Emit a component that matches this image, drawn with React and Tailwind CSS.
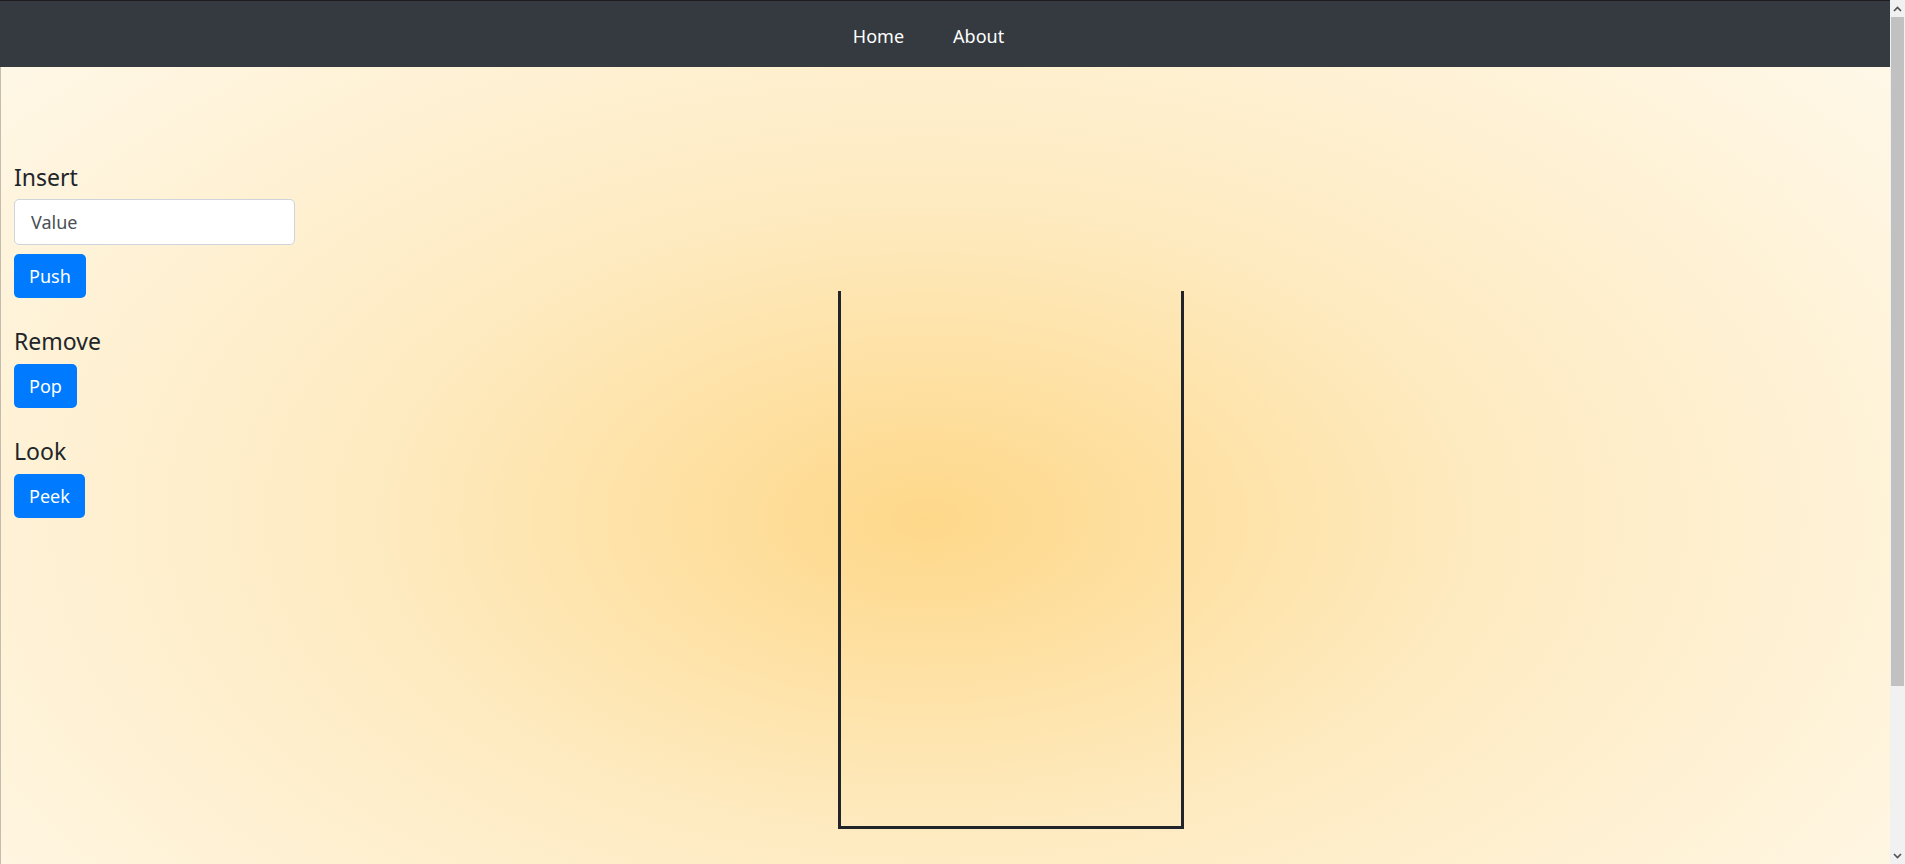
import { useState } from "react";

const font = { fontFamily: '"Segoe UI", "Noto Sans", sans-serif' };

function ActionButton({ children, onClick }) {
  return (
    <button
      type="button"
      onClick={onClick}
      className="h-[44px] px-[15px] rounded-[5px] bg-[#007bff] text-white text-[18px] leading-none hover:bg-[#0069d9]"
    >
      {children}
    </button>
  );
}

// drawn window scrollbar, as in the screenshot
function Scrollbar() {
  return (
    <div className="w-[15px] shrink-0 h-screen bg-[#f1f1f1] flex flex-col">
      <div className="h-[17px] flex items-center justify-center">
        <svg width="9" height="6" viewBox="0 0 9 6">
          <polyline points="1,5 4.5,1.5 8,5" fill="none" stroke="#505050" strokeWidth="1.6" />
        </svg>
      </div>
      <div className="h-[669px] mx-[1px] bg-[#c1c1c1]" />
      <div className="flex-1" />
      <div className="h-[17px] flex items-center justify-center">
        <svg width="9" height="6" viewBox="0 0 9 6">
          <polyline points="1,1 4.5,4.5 8,1" fill="none" stroke="#505050" strokeWidth="1.6" />
        </svg>
      </div>
    </div>
  );
}

export default function App() {
  const [value, setValue] = useState("");
  const [stack, setStack] = useState([]);

  const push = () => {
    if (!value) return;
    setStack([...stack, value]);
    setValue("");
  };
  const pop = () => setStack(stack.slice(0, -1));

  return (
    <div className="h-screen flex overflow-hidden" style={font}>
      <div className="flex-1 min-w-0 h-screen overflow-hidden">
        {/* navbar */}
        <nav className="h-[67px] bg-[#343a40] border-t border-[#1c1c1c] flex items-center justify-center gap-[49px] pr-[33px] pt-[4px]">
          <a href="#" className="text-white text-[18px] leading-none">
            Home
          </a>
          <a href="#" className="text-white text-[18px] leading-none">
            About
          </a>
        </nav>

        <main className="h-[1005px] border-l border-[#c4bcae] flex bg-[radial-gradient(ellipse_at_49%_45%,#fed88a_0%,#feebc2_42%,#fffaef_100%)]">
          {/* controls */}
          <div className="w-[315px] shrink-0 pl-[13px] pt-[96px] flex flex-col items-start">
            <h5 className="text-[23px] leading-[29px] text-[#212529]">Insert</h5>
            <input
              value={value}
              onChange={(e) => setValue(e.target.value)}
              placeholder="Value"
              className="mt-[7px] w-[281px] h-[46px] px-[16px] bg-white border border-[#ced4da] rounded-[5px] text-[18px] text-[#495057] placeholder:text-[#495057] outline-none"
            />
            <div className="mt-[9px]">
              <ActionButton onClick={push}>Push</ActionButton>
            </div>

            <h5 className="mt-[29px] text-[23px] leading-[29px] text-[#212529]">Remove</h5>
            <div className="mt-[8px]">
              <ActionButton onClick={pop}>Pop</ActionButton>
            </div>

            <h5 className="mt-[29px] text-[23px] leading-[29px] text-[#212529]">Look</h5>
            <div className="mt-[8px]">
              <ActionButton>Peek</ActionButton>
            </div>
          </div>

          {/* stack container */}
          <div className="ml-[522px] mt-[224px]">
            <div className="w-[346px] h-[538px] border-[3px] border-t-0 border-[#212529] flex flex-col-reverse items-stretch">
              {stack.map((item, i) => (
                <div
                  key={i}
                  className="h-[40px] bg-[#007bff] text-white text-[18px] flex items-center justify-center border-t border-white"
                >
                  {item}
                </div>
              ))}
            </div>
          </div>
        </main>
      </div>
      <Scrollbar />
    </div>
  );
}
